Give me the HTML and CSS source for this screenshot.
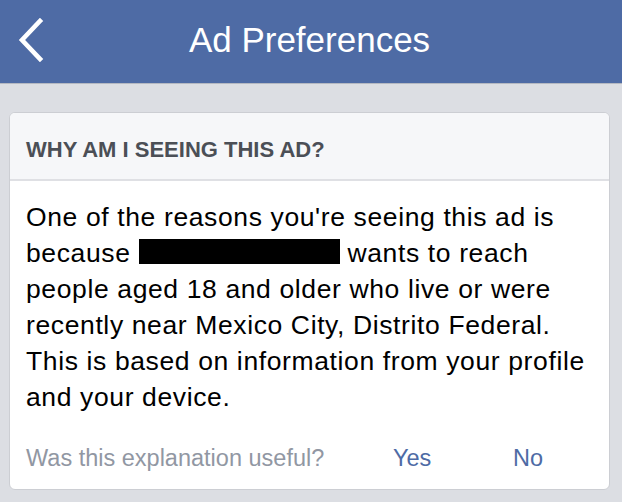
FILE: index.html
```html
<!DOCTYPE html>
<html lang="en">
<head>
<meta charset="utf-8">
<title>Ad Preferences</title>
<link rel="stylesheet" href="styles.css">
</head>
<body>
<header class="navbar">
  <a class="back" href="#" aria-label="Back">
    <svg width="30" height="44" viewBox="0 0 30 44"><polyline points="23,3 5,22 23,41" fill="none" stroke="#fff" stroke-width="4.6" stroke-linecap="square"/></svg>
  </a>
  <h1 class="title">Ad Preferences</h1>
</header>
<main class="content">
  <section class="card">
    <div class="card-head">WHY AM I SEEING THIS AD?</div>
    <p class="card-body">One of the reasons you're seeing this ad is<br>because <span class="redact"></span> wants to reach<br>people aged 18 and older who live or were<br>recently near Mexico City, Distrito Federal.<br>This is based on information from your profile<br>and your device.</p>
    <div class="card-foot">
      <span class="question">Was this explanation useful?</span>
      <a class="answer yes" href="#">Yes</a>
      <a class="answer no" href="#">No</a>
    </div>
  </section>
</main>
</body>
</html>
```

FILE: styles.css
```css
html, body {
  margin: 0;
  padding: 0;
}
body {
  width: 622px;
  height: 502px;
  overflow: hidden;
  background: #dcdee3;
  font-family: "Liberation Sans", Arial, sans-serif;
}
.navbar {
  height: 83px;
  background: #4e6ba5;
  border-bottom: 1px solid #b5b9c2;
  display: flex;
  align-items: center;
  justify-content: center;
  position: relative;
}
.back {
  position: absolute;
  left: 17px;
  top: 18px;
  display: block;
  width: 30px;
  height: 44px;
}
.back svg {
  display: block;
}
.title {
  margin: 0 0 0 -3px;
  color: #fff;
  font-weight: normal;
  font-size: 35px;
  line-height: 35px;
  padding-bottom: 4px;
}
.content {
  padding: 28px 12px 0 9px;
}
.card {
  background: #fff;
  border: 1px solid #ccced3;
  border-radius: 6px;
  overflow: hidden;
  height: 378px;
  box-sizing: border-box;
}
.card-head {
  background: #f6f7f9;
  border-bottom: 2px solid #dfe0e4;
  height: 68px;
  box-sizing: border-box;
  padding: 26px 0 0 16px;
  font-size: 22px;
  line-height: 22px;
  font-weight: bold;
  color: #4b4f56;
}
.card-body {
  margin: 0;
  padding: 18px 0 0 16px;
  font-size: 26.5px;
  line-height: 36px;
  letter-spacing: 0.62px;
  color: #000;
}
.redact {
  display: inline-block;
  width: 201px;
  height: 25px;
  background: #000;
  vertical-align: -2px;
}
.card-foot {
  display: flex;
  align-items: baseline;
  padding: 28px 0 0 16px;
  font-size: 23.5px;
  line-height: 30px;
}
.question {
  color: #9197a3;
  width: 367px;
}
.answer {
  color: #4e6ba5;
  text-decoration: none;
}
.yes {
  width: 120px;
}
```
